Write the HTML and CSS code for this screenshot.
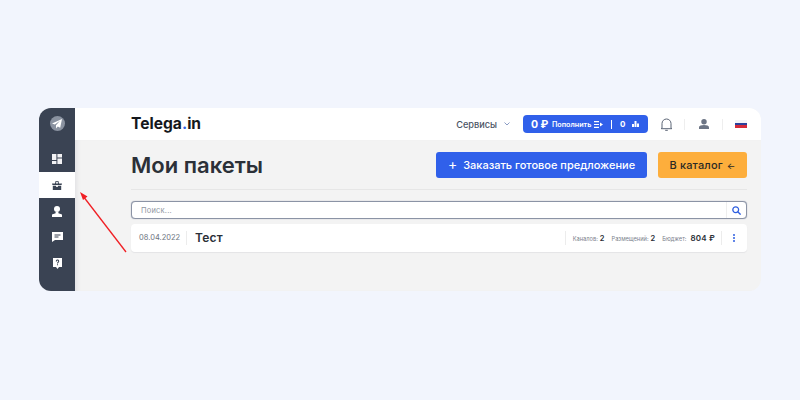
FILE: index.html
```html
<!DOCTYPE html>
<html lang="ru">
<head>
<meta charset="utf-8">
<title>Мои пакеты</title>
<link rel="stylesheet" href="styles.css">
</head>
<body>
<div class="frame">
  <aside class="sidebar">
    <div class="logo-circle">
      <svg width="10" height="10" viewBox="0 0 10 10"><path d="M10 0 0 4.4l2.8 1.2L8 1.8 4 6.2V9.6l1.8-2.2 2.4 1.4z" fill="#fff"/></svg>
    </div>
    <nav class="nav">
      <div class="nav-item">
        <svg width="10" height="10" viewBox="0 0 10 10" fill="#f2f2f4"><path d="M0 0h4.400v6H0zM5.400 0H10v3.600H5.400zM5.400 4.600H10V10H5.400zM0 7h4.400v3H0z"/></svg>
      </div>
      <div class="nav-item active">
        <svg width="10" height="9" viewBox="0 0 10 9" fill="#3a4353"><path d="M3 2.400 3.600 0h2.800L7 2.400h3L9.600 4H.4L0 2.400zM4 2.400h2L5.700.8H4.300zM.8 4.800h3.400v1.200h1.600V4.800h3.400V9H.8z"/></svg>
      </div>
      <div class="nav-item">
        <svg width="10" height="11" viewBox="0 0 10 11" fill="#fff"><circle cx="5" cy="3" r="3"/><path d="M3.600 6h2.800v1.200L10 8.600V11H0V8.600l3.600-1.400z"/></svg>
      </div>
      <div class="nav-item">
        <svg width="11" height="10" viewBox="0 0 11 10" fill="#fff"><path d="M0 0h11v8H3L0 10z"/><path d="M2.500 2.400h6v1h-6zM2.500 4.400h4v1h-4z" fill="#3a4353"/></svg>
      </div>
      <div class="nav-item">
        <svg width="9" height="11" viewBox="0 0 9 11" fill="#fff"><path d="M0 0h9v9H6L4.500 11 3 9H0z"/><path d="M2.800 3.400C2.800 1 6.200 1 6.200 3.200c0 1.300-1.200 1.200-1.200 2.400H4c0-1.700 1.200-1.600 1.200-2.400 0-.9-1.400-.9-1.400.2zM4 6.200h1v1H4z" fill="#3a4353"/></svg>
      </div>
    </nav>
  </aside>
  <div class="main">
    <header class="topbar">
      <div class="brand">Telega<span class="brand-dot">.</span>in</div>
      <div class="top-actions">
        <div class="services">Сервисы
          <svg width="6" height="4" viewBox="0 0 6 4" fill="none" stroke="#8b9cc4" stroke-width="1"><path d="M.5.5 3 3 5.500.5"/></svg>
        </div>
        <div class="wallet">
          <span class="wallet-sum">0 ₽</span>
          <span class="wallet-label">Пополнить</span>
          <svg width="9" height="7" viewBox="0 0 9 7" fill="#fff"><path d="M0 0h5v1.200H0zM0 2.900h5v1.200H0zM0 5.800h5V7H0zM6 1.500 9 3.500 6 5.500z"/></svg>
          <span class="wallet-sep"></span>
          <span class="wallet-zero">0</span>
          <svg width="7" height="6" viewBox="0 0 7 6" fill="#fff"><path d="M2.500 0h2v6h-2zM0 3h2v3H0zM5 2.500h2V6H5z"/></svg>
        </div>
        <svg class="bell" width="11" height="13" viewBox="0 0 11 13" fill="none" stroke="#5b6475" stroke-width="1"><path d="M1 10V5.500a4.500 4.500 0 0 1 9 0V10l.8.700H.2z"/><path d="M4.200 12.300h2.600"/></svg>
        <span class="top-sep"></span>
        <svg class="user" width="10" height="10" viewBox="0 0 11 11" fill="#6b7484"><circle cx="5.500" cy="3" r="3"/><path d="M0 11V9c0-1.500 2.500-2.400 5.500-2.400S11 7.500 11 9v2z"/></svg>
        <span class="top-sep top-sep-last"></span>
        <span class="flag"><i class="flag-white"></i><i class="flag-blue"></i><i class="flag-red"></i></span>
      </div>
    </header>
    <section class="content">
      <div class="title-row">
        <h1 class="title">Мои пакеты</h1>
        <div class="buttons">
          <div class="btn btn-blue"><span class="plus">+</span>Заказать готовое предложение</div>
          <div class="btn btn-orange">В каталог <span class="back">←</span></div>
        </div>
      </div>
      <div class="search">
        <span class="search-text">Поиск...</span>
        <span class="search-btn">
          <svg width="9" height="9" viewBox="0 0 9 9" fill="none" stroke="#2f5fe0" stroke-width="1.300"><circle cx="3.700" cy="3.700" r="2.900"/><path d="M5.800 5.800 8.600 8.600"/></svg>
        </span>
      </div>
      <div class="row">
        <span class="date">08.04.2022</span>
        <span class="name">Тест</span>
        <div class="stats">
          <span class="stat-label">Каналов:</span><b class="stat-value">2</b>
          <span class="stat-label">Размещений:</span><b class="stat-value">2</b>
          <span class="stat-label">Бюджет:</span><b class="stat-value budget">804 ₽</b>
        </div>
        <span class="dots"><i></i><i></i><i></i></span>
      </div>
    </section>
  </div>
  <svg class="arrow" width="50" height="64" viewBox="0 0 50 64" fill="none"><path d="M46 60 3 4" stroke="#f01f24" stroke-width="1.300"/><path d="M0 0 7.500 4.500 3 8z" fill="#f01f24"/></svg>
</div>
</body>
</html>
```
FILE: styles.css
```css
* { box-sizing: border-box; }
html, body { margin: 0; height: 400px; overflow: hidden; }
body {
  background: #f2f5fd;
  padding: 108px 39px 109px;
  font-family: Inter, "Liberation Sans", sans-serif;
  color: #2b3038;
}
.frame {
  position: relative;
  display: flex;
  height: 183px;
  border-radius: 12px;
  overflow: hidden;
  background: #f3f3f3;
}
.sidebar {
  width: 36px;
  flex: none;
  background: #3a4353;
  display: flex;
  flex-direction: column;
  align-items: center;
  padding-top: 8px;
}
.logo-circle {
  width: 15px;
  height: 15px;
  border-radius: 50%;
  background: #8a92a0;
  display: flex;
  align-items: center;
  justify-content: center;
}
.nav { width: 100%; margin-top: 15px; display: flex; flex-direction: column; }
.nav-item {
  height: 26px;
  display: flex;
  align-items: center;
  justify-content: center;
}
.nav-item.active { background: #fff; }
.main { flex: 1; display: flex; flex-direction: column; min-width: 0; }
.topbar {
  height: 32px;
  flex: none;
  background: #fff;
  display: flex;
  align-items: center;
  justify-content: space-between;
  padding: 0 14px 0 56px;
}
.brand { font-size: 15.600px; font-weight: 700; color: #14171c; padding-bottom: 2px; }
.brand-dot { color: #2f5fe0; }
.top-actions { display: flex; align-items: center; }
.services {
  display: flex;
  align-items: center;
  gap: 7px;
  font-size: 9.200px;
  font-weight: 500;
  color: #4a5363;
}
.wallet {
  margin-left: 13px;
  width: 125px;
  height: 18px;
  border-radius: 4px;
  background: #3060ea;
  color: #fff;
  display: flex;
  align-items: center;
  padding-left: 8px;
}
.wallet-sum { font-size: 10.500px; font-weight: 700; width: 21px; white-space: nowrap; }
.wallet-label { font-size: 7.200px; font-weight: 600; margin-right: 2px; width: 40px; white-space: nowrap; }
.wallet-sep { width: 1px; height: 9px; background: #fff; margin: 0 8px; }
.wallet-zero { font-size: 8px; font-weight: 700; margin-right: 7px; }
.bell { margin-left: 13px; }
.top-sep { width: 1px; height: 11px; background: #eeeeee; margin: 0 14px 0 12px; }
.top-sep-last { margin-right: 12px; margin-left: 13px; }
.flag {
  display: flex;
  flex-direction: column;
  width: 12px;
  height: 8px;
}
.flag i { display: block; flex: 1; }
.flag-white { background: #f4f4f8; }
.flag-blue { background: #2b3f9c; }
.flag-red { background: #d42a3a; }
.content {
  flex: 1;
  padding: 12px 14px 0 56px;
  box-shadow: inset 5px 0 4px -3px #e2e2e4;
}
.title-row {
  display: flex;
  align-items: flex-start;
  justify-content: space-between;
  height: 38px;
  border-bottom: 1px solid #e6e6e6;
}
.title {
  margin: 0;
  font-size: 22px;
  line-height: 26px;
  font-weight: 600;
  color: #2b3038;
}
.buttons { display: flex; gap: 11px; }
.btn {
  height: 26px;
  border-radius: 3px;
  display: flex;
  align-items: center;
  justify-content: center;
  font-size: 11px;
  font-weight: 500;
}
.btn-blue { width: 211px; background: #3060ea; color: #fff; }
.plus { font-size: 14px; line-height: 1; margin-right: 6px; font-weight: 400; padding-bottom: 2px; }
.btn-orange { width: 89px; background: #fdae3c; color: #2b2a25; letter-spacing: 0.15px; gap: 4px; }
.back { font-size: 9px; }
.search {
  margin-top: 11px;
  height: 18px;
  background: #fff;
  border: 1px solid #8b93a5;
  box-shadow: 0 0 1px #8b93a5;
  border-radius: 4px;
  display: flex;
  align-items: center;
  justify-content: space-between;
  padding-left: 9px;
}
.search-text { font-size: 7.500px; color: #8f95a1; letter-spacing: 0.2px; }
.search-btn {
  width: 20px;
  height: 100%;
  border-left: 1px solid #eeeeee;
  display: flex;
  align-items: center;
  justify-content: center;
}
.row {
  margin-top: 5px;
  height: 28px;
  background: #fff;
  border-radius: 4px;
  box-shadow: 0 1px 1px #e4e4e6;
  display: flex;
  align-items: center;
  padding-left: 8px;
}
.date {
  font-size: 7.500px;
  color: #6d7480;
  width: 48px;
  border-right: 1px solid #ececec;
  line-height: 14px;
}
.name { margin-left: 8px; font-size: 12px; font-weight: 600; color: #2b3038; letter-spacing: 0.2px; padding-bottom: 2px; }
.stats {
  margin-left: auto;
  display: flex;
  align-items: center;
  height: 14px;
  padding-left: 7px;
  border-left: 1px solid #ececec;
}
.stat-label { font-size: 5.700px; color: #7b818c; margin-right: 2px; }
.stat-value { font-size: 7.500px; font-weight: 600; color: #2b3038; margin-right: 7px; }
.budget { font-size: 8px; margin-left: 2px; letter-spacing: 0.2px; margin-right: 6px; }
.dots {
  width: 26px;
  height: 14px;
  border-left: 1px solid #ececec;
  padding-right: 2px;
  display: flex;
  flex-direction: column;
  align-items: center;
  justify-content: center;
  gap: 1px;
}
.dots i { width: 2px; height: 2px; border-radius: 50%; background: #2f5fe0; }
.arrow { position: absolute; left: 41px; top: 84px; }
```
